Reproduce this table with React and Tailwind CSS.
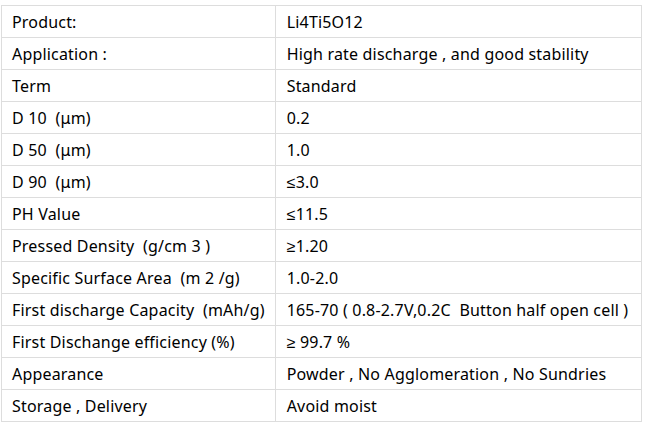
import React from 'react';

const rows = [
  ['Product:', 'Li4Ti5O12'],
  ['Application :', 'High rate discharge , and good stability'],
  ['Term', 'Standard'],
  ['D 10  (μm)', '0.2'],
  ['D 50  (μm)', '1.0'],
  ['D 90  (μm)', '≤3.0'],
  ['PH Value', '≤11.5'],
  ['Pressed Density  (g/cm 3 )', '≥1.20'],
  ['Specific Surface Area  (m 2 /g)', '1.0-2.0'],
  ['First discharge Capacity  (mAh/g)', '165-70 ( 0.8-2.7V,0.2C  Button half open cell )'],
  ['First Dischange efficiency (%)', '≥ 99.7 %'],
  ['Appearance', 'Powder , No Agglomeration , No Sundries'],
  ['Storage , Delivery', 'Avoid moist'],
];

const App = () => {
  return (
    <div className="bg-white w-[654px] h-[427px] pt-[5px] pl-[1px]">
      <table
        className="border-collapse w-[641px] text-[16px] tracking-[0.18px] text-black whitespace-pre"
        style={{ fontFamily: '"Noto Sans", sans-serif' }}
      >
        <tbody>
          {rows.map(([label, value]) => (
            <tr key={label} className="h-[32px]">
              <td className="w-[273px] border border-[#dddddd] px-[10px] py-0 leading-[30px]">{label}</td>
              <td className="border border-[#dddddd] px-[11px] py-0 leading-[30px]">{value}</td>
            </tr>
          ))}
        </tbody>
      </table>
    </div>
  );
};

export default App;
